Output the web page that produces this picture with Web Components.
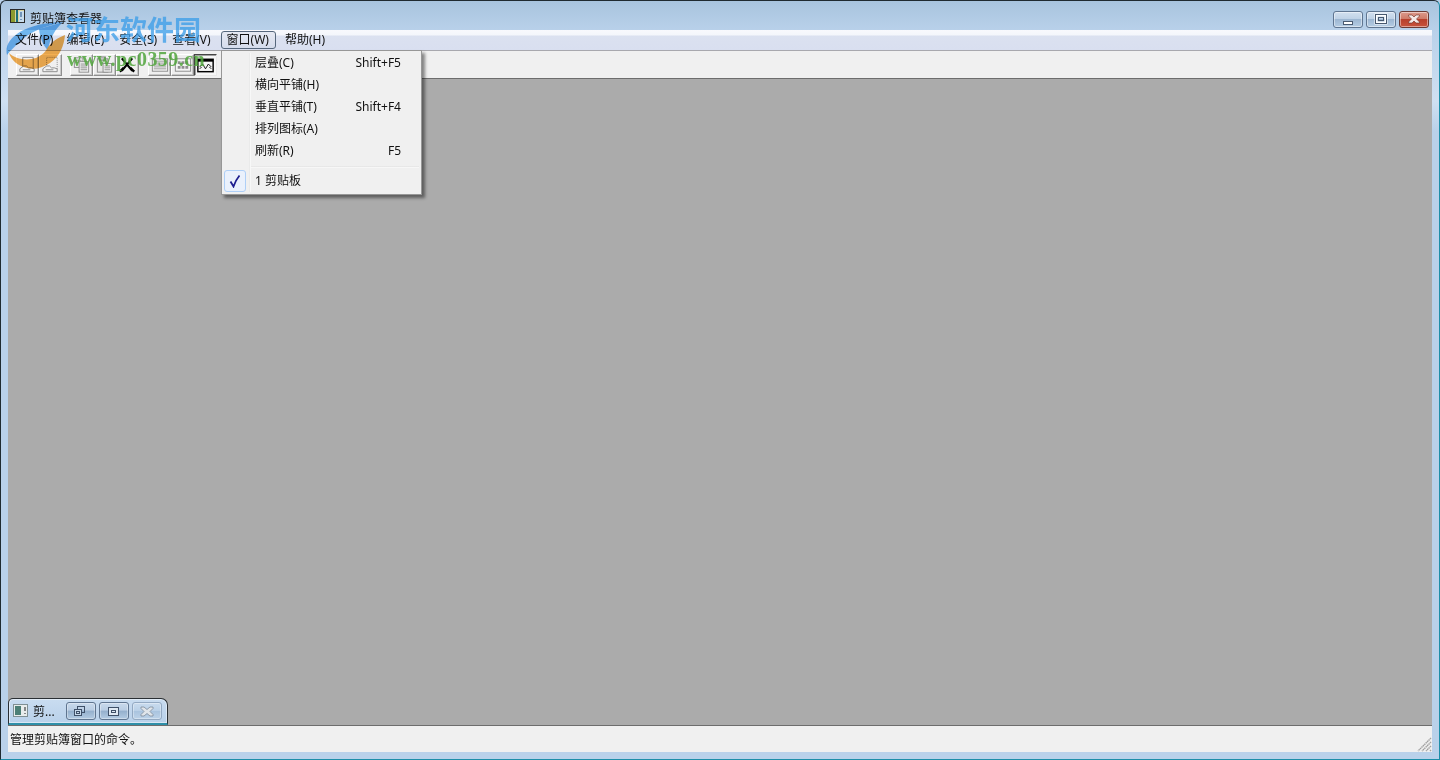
<!DOCTYPE html>
<html lang="zh"><head><meta charset="utf-8"><style>
html,body{margin:0;padding:0;width:1440px;height:760px;overflow:hidden;background:#b9d1ea}
body{font:12px "Noto Sans","Noto Sans CJK SC",sans-serif;color:#111}
</style></head><body>
<app-window></app-window>
<script>
const FONT='"Noto Sans","Noto Sans CJK SC",sans-serif';
function def(name,html){customElements.define(name,class extends HTMLElement{connectedCallback(){if(this.shadowRoot)return;const s=this.attachShadow({mode:'open'});s.innerHTML=typeof html==='function'?html(this):html;}})}

def('cap-button',h=>{const k=h.getAttribute('kind');
const glyph={min:'<rect x="10.500" y="9.500" width="9" height="3" fill="#fff" stroke="#4a5a70" stroke-width="1"/>',
max:'<rect x="10" y="3" width="10" height="8" fill="none" stroke="#fff" stroke-width="3"/><rect x="9.500" y="2.500" width="11" height="9" fill="none" stroke="#47586e"/><rect x="12.500" y="5.500" width="5" height="3" fill="none" stroke="#47586e"/>',
close:'<path d="M9.500 3h3.500l2 2 2-2h3.500v1l-3 3 3 3v1H17l-2-2-2 2H9.500v-1l3-3-3-3z" fill="#f4e8e6" stroke="#6a2a20" stroke-width=".6"/>'}[k];
return `<style>:host{display:block;width:30px;height:17px}
div{box-sizing:border-box;width:30px;height:17px;border:1px solid ${k==='close'?'#6b3a34':'#5f7590'};border-radius:3px;box-shadow:inset 0 0 0 1px rgba(255,255,255,.45);
background:${k==='close'?'linear-gradient(#dc9a8c 0,#cf7b69 45%,#b8402c 50%,#c8533c 100%)':'linear-gradient(#d2e0ef 0,#bfd2e6 45%,#9db7d2 50%,#b6cde4 100%)'}}
svg{display:block}</style><div><svg width="28" height="15" viewBox="1 0 28 15">${glyph}</svg></div>`});

def('menu-label',`<style>:host{display:block;flex:none;box-sizing:border-box;height:20px;line-height:20px;padding:0 6px;white-space:nowrap;color:#111;font:12px/20px ${FONT}}
:host(:first-child){margin-right:-2px}
:host([open]){height:18px;line-height:16px;margin:1px 0 1px 1px;padding:0 6px 0 5px;border:1px solid #56677c;border-radius:3px;background:linear-gradient(#e6e9f2,#d5dcec)}</style><slot></slot>`);

def('menu-bar',`<style>:host{display:flex;gap:3px;height:20px;padding-left:1px;background:linear-gradient(#f8f9fd 0,#f4f6fb 25%,#dbe1f0 30%,#d9dff0 100%);border-bottom:1px solid #a8a8ae}</style><slot></slot>`);

const L='#8c8c8c';
const page=(x,dash)=>`<path d="M${x} 14V2h11v12" fill="#f0f0f0" stroke="${L}" ${dash?'stroke-dasharray="1 1"':''}/>`;
const toolIcons={
 open:page(6,false)+`<path d="M3 17v-3l4-3h3l2 2h3l3 1v3z" fill="#f2f2f2" stroke="${L}"/><path d="M6 15h8" stroke="${L}"/>`,
 save:page(7,true)+`<path d="M3 17v-3l4-3h3l2 2h3l3 1v3z" fill="#f2f2f2" stroke="${L}"/><path d="M6 15h8" stroke="${L}"/>`,
 copy:`<rect x="3.500" y="2.500" width="9" height="10" fill="#f0f0f0" stroke="${L}"/><path d="M5 5h6M5 7h3" stroke="${L}"/><rect x="8.500" y="6.500" width="10" height="11" fill="#f4f4f4" stroke="${L}"/><path d="M10 9h7M10 11h7M10 13h7M10 15h7" stroke="${L}"/>`,
 paste:`<rect x="3.500" y="3.500" width="11" height="14" fill="#e6e6e6" stroke="${L}"/><rect x="6" y="1.500" width="6" height="3.500" fill="#c4c4c4" stroke="${L}"/><rect x="9.500" y="8.500" width="9" height="9" fill="#f4f4f4" stroke="${L}"/><path d="M11 11h6M11 13h6M11 15h6" stroke="${L}"/>`,
 del:'<path d="M5 3l11 13M16 3L5 16" stroke="#000" stroke-width="2.200"/><path d="M3 17l4-4M14 13l4 4" stroke="#000" stroke-width="2.500"/>',
 list:`<rect x="3.500" y="3.500" width="16" height="13" fill="#f4f4f4" stroke="${L}"/><path d="M5 6h13M5 8h13M5 10h13M5 12h13M5 14h13" stroke="#9a9a9a"/>`,
 grid:`<rect x="3.500" y="3.500" width="16" height="13" fill="#f4f4f4" stroke="${L}"/><path d="M6 6h3v3H6zM10 6h3v3h-3zM14 6h3v3h-3zM6 11h3v3H6zM10 11h3v3h-3zM14 11h3v3h-3z" fill="#8f8f8f"/>`,
 pic:'<rect x="3" y="4" width="16" height="13" fill="#f5f5f5" stroke="#000" stroke-width="1.500"/><rect x="3" y="4" width="16" height="2.500" fill="#000"/><path d="M5 12l3-3 3 5 3-5 3 3M5 14l2-2M15 12l2 2" fill="none" stroke="#111"/>'};
def('tool-btn',h=>{const p=h.hasAttribute('pressed');
return `<style>:host{display:block;flex:none;width:23px;height:22px}
div{box-sizing:border-box;width:100%;height:100%;display:flex;align-items:center;justify-content:center;background:${p?'#f6f6f6':'#efefef'};
border:1px solid;border-color:${p?'#444 #e8e8e8 #e8e8e8 #444':'#fff #8e8e8e #8e8e8e #fff'};box-shadow:${p?'inset 1px 1px 0 #a0a0a0':'inset -1px -1px 0 #c8c8c8'}}
</style><div><svg width="22" height="20" viewBox="0 0 22 20">${toolIcons[h.getAttribute('icon')]}</svg></div>`});

def('tool-bar',`<style>:host{display:flex;align-items:center;height:28px;box-sizing:border-box;padding:2px 0 2px 8px;background:#f0f0f0;border-bottom:1px solid #6d6d6d}
.g{width:8px}.h{width:9px}</style>
<tool-btn icon="open"></tool-btn><tool-btn icon="save"></tool-btn><span class="g"></span>
<tool-btn icon="copy"></tool-btn><tool-btn icon="paste"></tool-btn><tool-btn icon="del"></tool-btn><span class="h"></span>
<tool-btn icon="list"></tool-btn><tool-btn icon="grid"></tool-btn><tool-btn icon="pic" pressed></tool-btn>`);

def('drop-item',h=>`<style>:host{display:flex;align-items:center;height:22px;width:100%;box-sizing:border-box;padding-left:33px;padding-right:20px;color:#111;white-space:nowrap;font:12px/22px ${FONT}}
span{margin-left:auto}</style><slot></slot><span>${h.getAttribute('key')||''}</span>`);

def('drop-menu',`<style>:host{position:absolute;left:220px;top:49px;width:201px;height:145px;box-sizing:border-box;background:#f0f0f0;border:1px solid #979797;box-shadow:3px 3px 3px rgba(0,0,0,.45);padding:1px 0 0;display:block}
.gut{position:absolute;left:27px;top:2px;bottom:2px;width:2px;background:linear-gradient(90deg,#e2e3e3,#fff)}
.sep{height:2px;margin:4px 2px 1px 29px;background:linear-gradient(#e0e0e0,#fff)}
.last{position:relative;height:24px;display:flex;align-items:center}
.chk{position:absolute;left:2px;top:1px;width:22px;height:22px;box-sizing:border-box;border:1px solid #aecff7;border-radius:3px;background:#eaf1fc;display:flex;align-items:center;justify-content:center}
</style><div class="gut"></div>
<drop-item key="Shift+F5">层叠(C)</drop-item><drop-item>横向平铺(H)</drop-item><drop-item key="Shift+F4">垂直平铺(T)</drop-item><drop-item>排列图标(A)</drop-item><drop-item key="F5">刷新(R)</drop-item>
<div class="sep"></div><div class="last"><div class="chk"><svg width="12" height="14" viewBox="0 0 12 14"><path d="M1.500 7.500L4.500 12.500C6 8 8 4.500 10.500 1.500" fill="none" stroke="#1f1f8f" stroke-width="1.800"/></svg></div><drop-item>1 剪贴板</drop-item></div>`);

def('mini-win',`<style>:host{position:absolute;left:0;bottom:0;width:160px;height:27px;box-sizing:border-box;border:1px solid #2a2f33;border-top-left-radius:5px;border-top-right-radius:7px;background:linear-gradient(#c9dcf0,#b9d1ea);box-shadow:inset 0 0 0 1px rgba(255,255,255,.45);display:flex;align-items:center;padding-left:4px;border-bottom:2px solid #2e8fa8}
.t{margin-left:4px;width:33px;color:#111;white-space:nowrap}
.b{display:flex;gap:3px}
</style><svg width="16" height="14" viewBox="0 0 16 14"><rect x=".5" y=".5" width="14" height="12" fill="#e8ecec" stroke="#7f8f93"/><rect x="2" y="2" width="6" height="9" fill="#4c7f76"/><path d="M12 3v4M12 9v1" stroke="#222"/></svg>
<span class="t">剪...</span><div class="b"><mini-btn kind="restore"></mini-btn><mini-btn kind="max"></mini-btn><mini-btn kind="close"></mini-btn></div>`);

def('mini-btn',h=>{const k=h.getAttribute('kind');const g={restore:'<rect x="11.500" y="3.500" width="7" height="6" fill="none" stroke="#3f5068"/><rect x="8.500" y="6.500" width="7" height="6" fill="#c6d8ea" stroke="#3f5068"/><rect x="10.500" y="8.500" width="3" height="2" fill="none" stroke="#3f5068"/>',
max:'<rect x="9.500" y="4.500" width="10" height="8" fill="#dfe9f3" stroke="#3f5068"/><rect x="12.500" y="7.500" width="4" height="2" fill="none" stroke="#3f5068"/>',
close:'<path d="M9 4h3l3 2.500L18 4h3v1.500L18 8.500l3 3V13h-3l-3-2.500L12 13H9v-1.500l3-3-3-3z" fill="#e0e5ea" stroke="#7d8a99" stroke-width=".8"/>'}[k];
const dis=k==='close';
return `<style>:host{display:block;width:30px;height:18px}div{box-sizing:border-box;width:30px;height:18px;border:1px solid ${dis?'#93a9c2':'#5f7590'};border-radius:3px;box-shadow:inset 0 0 0 1px rgba(255,255,255,.35);background:${dis?'linear-gradient(#c9dbee,#b9d0e7 50%,#a9c3de 50%,#bcd2e8)':'linear-gradient(#c8d9ec,#b9cde3 45%,#94afcc 50%,#b3cbe3)'}}svg{display:block}</style><div><svg width="28" height="16" viewBox="1 0 28 16">${g}</svg></div>`});

def('status-bar',`<style>:host{display:flex;align-items:center;position:relative;height:26px;box-sizing:border-box;padding-left:2px;background:#f0f0f0;color:#111;white-space:nowrap}
svg{position:absolute;right:0;bottom:0}</style><slot></slot>
<svg width="15" height="15" viewBox="0 0 15 15"><path d="M14 1L1 14M14 5L5 14M14 9L9 14M14 13l-1 1" stroke="#a0a0a0" stroke-width="1.400" stroke-dasharray="1.500 .5"/></svg>`);

def('water-mark',`<style>:host{position:absolute;left:0;top:0;width:230px;height:80px;pointer-events:none;display:block}
svg{position:absolute;left:0;top:0;mix-blend-mode:multiply}
.a{position:absolute;left:65px;top:10px;font:bold 27px/36px "Noto Sans CJK SC",sans-serif;color:rgba(60,158,232,.78);white-space:nowrap}
.b{position:absolute;left:66px;top:47px;font:bold 20px/22px "Liberation Serif",serif;color:rgba(80,165,60,.85);white-space:nowrap;letter-spacing:.45px}
</style><svg width="70" height="80" viewBox="0 0 70 80">
<path d="M6 54C2 38 22 22 62 21 44 25 28 31 19 41c-6 5-10 9-13 13z" fill="#5cb0ee" opacity=".85"/>
<path d="M38 28l24-7c-8 7-13 16-15 28-4-3-8-11-9-21z" fill="#5cb0ee" opacity=".85"/>
<path d="M8 52c6 6 17 8 27 5 7-3 10-7 12-11 4-5 9-9 17-12-1 11-5 21-15 28-8 5-15 7-23 5C17 65 10 59 8 52z" fill="#f2a53e" opacity=".9"/></svg>
<div class="a">河东软件园</div><div class="b">www.pc0359.cn</div>`);

def('app-window',`<style>:host{display:block;position:relative;width:1440px;height:760px;box-sizing:border-box;border:1px solid #1f2a30;border-bottom-color:#1d8ea8;border-right-color:#1d8ea8;border-top-left-radius:6px;border-top-right-radius:6px;
background:linear-gradient(180deg,#a8c4de 0,#b9d1ea 30px,#cfe0f2 100px,#b9d1ea 130px);overflow:hidden}
.cap{display:flex;align-items:center;height:29px;padding:0 10px 0 8px}
.cap svg{flex:none}.ttl{margin-left:4px;color:#111;position:relative;top:2px}
.btns{margin-left:auto;display:flex;gap:3px;margin-top:7px}
.body{position:absolute;left:7px;right:7px;top:29px;bottom:7px;display:flex;flex-direction:column}
.mdi{position:relative;flex:1;background:#ababab;border-bottom:1px solid #6d6d6d}
</style>
<div class="cap"><svg width="17" height="17" viewBox="0 0 17 17"><rect x="1.500" y="2.500" width="14" height="13" fill="#d8d4a0" stroke="#2a2a2a"/><rect x="2" y="3" width="4" height="12" fill="#8b9a2e"/><rect x="7" y="3" width="2" height="12" fill="#1b6f78"/><rect x="10" y="4" width="5" height="11" fill="#c8dcec"/><path d="M12 5v5M12 12v1" stroke="#1b4f88"/></svg>
<span class="ttl">剪贴簿查看器</span><div class="btns"><cap-button kind="min"></cap-button><cap-button kind="max"></cap-button><cap-button kind="close"></cap-button></div></div>
<div class="body"><menu-bar><menu-label>文件(P)</menu-label><menu-label>编辑(E)</menu-label><menu-label>安全(S)</menu-label><menu-label>查看(V)</menu-label><menu-label open>窗口(W)</menu-label><menu-label>帮助(H)</menu-label></menu-bar>
<tool-bar></tool-bar><div class="mdi"><mini-win></mini-win></div><status-bar>管理剪贴簿窗口的命令。</status-bar></div>
<drop-menu></drop-menu><water-mark></water-mark>`);
</script></body></html>
